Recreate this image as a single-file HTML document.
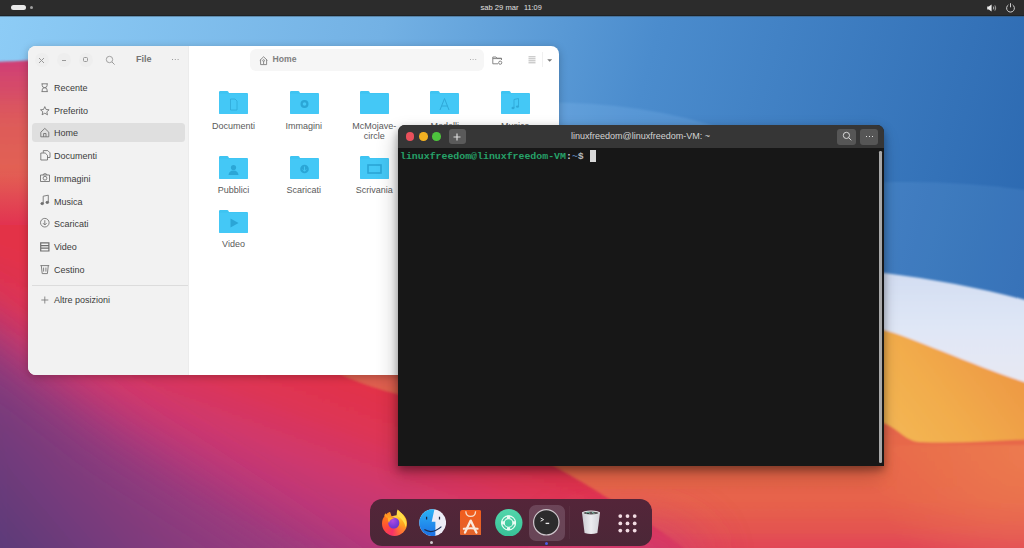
<!DOCTYPE html>
<html><head><meta charset="utf-8">
<style>
*{margin:0;padding:0;box-sizing:border-box}
html,body{width:1024px;height:548px;overflow:hidden;font-family:"Liberation Sans",sans-serif;background:#2f6db5}
#wall{position:absolute;left:0;top:0;width:1024px;height:548px}
#topbar{position:absolute;left:0;top:0;width:1024px;height:16px;background:linear-gradient(#2c2c2c 0,#2c2c2c 15px,#1e2327 15px);box-shadow:0 1px 0 rgba(60,80,95,.45);color:#e8e8e8}
.abs{position:absolute}
#fm{position:absolute;left:28px;top:46px;width:531px;height:329px;border-radius:8px;overflow:hidden;background:#fff;box-shadow:0 2px 8px rgba(0,0,0,.25)}
#side{position:absolute;left:0;top:0;width:161px;height:329px;background:#f2f2f2;box-shadow:inset -1px 0 0 #ececec}
.si{position:absolute;left:26px;font-size:9px;color:#3c3c3c;line-height:11px}
.fold{position:absolute;width:29px;height:23px}
.fl{position:absolute;width:70px;text-align:center;font-size:9px;color:#5a5a5a;line-height:10.3px}
#term{position:absolute;left:398px;top:125px;width:486px;height:341px;border-radius:7px 7px 0 0;overflow:hidden;background:#171717;box-shadow:0 4px 8px rgba(0,0,0,.36),-3px 9px 20px rgba(0,0,0,.2)}
#dock{position:absolute;left:370px;top:499px;width:282px;height:47px;border-radius:12px;background:linear-gradient(#542539,#4b2737)}
</style></head><body>
<svg id="wall" width="1024" height="548" viewBox="0 0 1024 548">
<defs>
<linearGradient id="sky" gradientUnits="userSpaceOnUse" x1="0" y1="20" x2="1024" y2="300">
<stop offset="0" stop-color="#8dccf6"/>
<stop offset="0.35" stop-color="#73b1e4"/>
<stop offset="0.6" stop-color="#4b8ccd"/>
<stop offset="1" stop-color="#2b68b0"/>
</linearGradient>
<linearGradient id="wht" gradientUnits="userSpaceOnUse" x1="0" y1="270" x2="0" y2="390">
<stop offset="0" stop-color="#d2ddf2"/>
<stop offset="0.5" stop-color="#e0e7f6"/>
<stop offset="1" stop-color="#e8e8f2"/>
</linearGradient>
<linearGradient id="orng" gradientUnits="userSpaceOnUse" x1="1024" y1="330" x2="880" y2="440">
<stop offset="0" stop-color="#ec9140"/>
<stop offset="0.6" stop-color="#f2ac4c"/>
<stop offset="1" stop-color="#f4b855"/>
</linearGradient>
<linearGradient id="ored" gradientUnits="userSpaceOnUse" x1="0" y1="60" x2="0" y2="548">
<stop offset="0" stop-color="#cf3e76"/>
<stop offset="0.12" stop-color="#dd5a5b"/>
<stop offset="0.25" stop-color="#e36351"/>
<stop offset="0.66" stop-color="#df5f4f"/>
<stop offset="0.8" stop-color="#e8694a"/>
<stop offset="0.9" stop-color="#e7634b"/>
<stop offset="0.96" stop-color="#e45550"/>
<stop offset="1" stop-color="#e14656"/>
</linearGradient>
<radialGradient id="oglow" gradientUnits="userSpaceOnUse" cx="1030" cy="450" r="160">
<stop offset="0" stop-color="#f08d55" stop-opacity="0.5"/>
<stop offset="1" stop-color="#f08d55" stop-opacity="0"/>
</radialGradient>
<linearGradient id="front" gradientUnits="userSpaceOnUse" x1="250" y1="330" x2="150" y2="600">
<stop offset="0" stop-color="#e33346"/>
<stop offset="0.18" stop-color="#de3454"/>
<stop offset="0.35" stop-color="#d0386c"/>
<stop offset="0.5" stop-color="#bd3878"/>
<stop offset="0.65" stop-color="#a83a7c"/>
<stop offset="1" stop-color="#903a7e"/>
</linearGradient>
<linearGradient id="purp" gradientUnits="userSpaceOnUse" x1="170" y1="480" x2="30" y2="600">
<stop offset="0" stop-color="#923a7e"/>
<stop offset="0.45" stop-color="#793a7c"/>
<stop offset="1" stop-color="#573a78"/>
</linearGradient>
<filter id="bl2" x="-50%" y="-50%" width="200%" height="200%"><feGaussianBlur stdDeviation="28"/></filter>
<filter id="bl" x="-5%" y="-5%" width="110%" height="110%"><feGaussianBlur stdDeviation="1.2"/></filter>
</defs>
<rect width="1024" height="548" fill="url(#sky)"/>
<path d="M480 108 C 560 96, 660 104, 740 135 L 740 300 L 480 300 Z" fill="#9fd0ff" opacity="0.16" filter="url(#bl)"/>
<path d="M800 190 C 880 178, 960 180, 1040 192 L 1040 320 L 800 320 Z" fill="#9fd0ff" opacity="0.1" filter="url(#bl)"/>
<g filter="url(#bl)">
<path d="M560 330 C 700 272, 820 264, 884 273 C 940 280, 990 290, 1040 304 L1040 560 L560 560 Z" fill="url(#wht)"/>
<path d="M560 360 C 700 320, 820 318, 884 330 C 912 337, 985 371, 1040 387 L1040 560 L560 560 Z" fill="url(#orng)"/>
<path d="M-20 62.5 C 10 61.8, 40 59.6, 60 59 C 200 61, 500 200, 700 330 C 800 400, 850 420, 884 423 C 900 430, 905 441, 920 442 C 960 444, 1000 440, 1040 439 L1040 560 L-20 560 Z" fill="url(#ored)"/>
<rect x="860" y="445" width="180" height="115" fill="url(#oglow)"/>
<path d="M-20 222 L 30 222 C 100 245, 250 320, 342 375 C 360 383, 380 390, 398 394 C 470 425, 520 448, 554 466 C 580 480, 600 493, 610 499 C 640 516, 670 536, 700 562 L-20 562 Z" fill="url(#front)"/>
</g>
<linearGradient id="softL" gradientUnits="userSpaceOnUse" x1="0" y1="168" x2="0" y2="225"><stop offset="0" stop-color="#e1345a" stop-opacity="0"/><stop offset="1" stop-color="#e23350" stop-opacity="1"/></linearGradient>
<rect x="-5" y="168" width="40" height="57" fill="url(#softL)"/>
<ellipse cx="630" cy="565" rx="70" ry="38" fill="#cf3c74" opacity="0.85" filter="url(#bl2)"/>
<path d="M-60 298 Q 40 380, 120 440 Q 250 520, 430 650 L -60 650 Z" fill="url(#purp)" filter="url(#bl2)"/>
</svg>

<div id="topbar">
 <div class="abs" style="left:11px;top:5px;width:14.5px;height:5px;border-radius:3px;background:#e8e8e8"></div>
 <div class="abs" style="left:29.8px;top:6px;width:3.2px;height:3.2px;border-radius:2px;background:#a0a0a0"></div>
 <div class="abs" style="left:480.5px;top:2.5px;font-size:7.6px;line-height:10px;color:#e0e0e0;white-space:pre">sab 29 mar</div>
 <div class="abs" style="left:524px;top:2.5px;font-size:7.3px;line-height:10px;color:#e0e0e0;white-space:pre">11:09</div>
 <svg class="abs" style="left:986px;top:3px" width="12" height="10" viewBox="0 0 12 10">
  <path d="M1.2 3.6 H2.8 L5.6 1.6 V8.4 L2.8 6.4 H1.2 Z" fill="#ececec"/>
  <path d="M7.4 3.6 Q8.3 5 7.4 6.4" stroke="#c8c8c8" stroke-width="0.9" fill="none"/>
  <path d="M8.9 2.4 Q10.6 5 8.9 7.6" stroke="#b0b0b0" stroke-width="0.9" fill="none"/>
 </svg>
 <svg class="abs" style="left:1005px;top:2px" width="11" height="11" viewBox="0 0 11 11">
  <path d="M3.4 2.9 A3.9 3.9 0 1 0 7.6 2.9" stroke="#cfcfcf" stroke-width="1" fill="none"/>
  <path d="M5.5 1.2 V5.3" stroke="#cfcfcf" stroke-width="1"/>
 </svg>
</div>

<div id="fm">
 <div id="side">
  <div class="abs" style="left:6.5px;top:7px;width:14px;height:14px;border-radius:7px;background:#eeeeee"></div>
  <svg class="abs" style="left:10px;top:10.5px" width="7" height="7" viewBox="0 0 7 7"><path d="M1 1 L6 6 M6 1 L1 6" stroke="#999" stroke-width="1"/></svg>
  <div class="abs" style="left:28.6px;top:7px;width:14px;height:14px;border-radius:7px;background:#eeeeee"></div>
  <div class="abs" style="left:33.5px;top:13.5px;width:4px;height:1px;background:#999"></div>
  <div class="abs" style="left:50.5px;top:7px;width:14px;height:14px;border-radius:7px;background:#eeeeee"></div>
  <div class="abs" style="left:55px;top:11.3px;width:5px;height:5px;border:1px solid #999;border-radius:1.5px"></div>
  <svg class="abs" style="left:77px;top:8.5px" width="11" height="11" viewBox="0 0 11 11"><circle cx="4.5" cy="4.5" r="3.2" stroke="#999" stroke-width="0.9" fill="none"/><path d="M6.9 6.9 L9.6 9.6" stroke="#999" stroke-width="1"/></svg>
  <div class="abs" style="left:108px;top:8px;font-size:9px;font-weight:bold;color:#747474;line-height:11px">File</div>
  <div class="abs" style="left:143.5px;top:13px;width:1.4px;height:1.4px;background:#999;box-shadow:2.8px 0 0 #999,5.6px 0 0 #999"></div>

  <div class="abs" style="left:4px;top:77.2px;width:153.4px;height:19px;border-radius:3.5px;background:#dfdfdf"></div>
  <svg class="abs" style="left:0;top:0" width="160" height="329" viewBox="0 0 160 329" fill="none" stroke="#6e6e6e" stroke-width="0.85">
   <!-- hourglass -->
   <path d="M13.5 37.8 H19.8 M13.5 45.6 H19.8 M14.2 37.8 V39.5 Q14.2 41.5 16.6 41.7 Q19.1 41.9 19.1 43.9 V45.6 M19.1 37.8 V39.5 Q19.1 41.5 16.6 41.7 Q14.2 41.9 14.2 43.9 V45.6"/>
   <!-- star -->
   <path d="M16.8 60.6 L18.1 63.5 L21.1 63.8 L18.8 65.8 L19.5 68.8 L16.8 67.2 L14.1 68.8 L14.8 65.8 L12.5 63.8 L15.5 63.5 Z"/>
   <!-- home -->
   <path d="M12.8 86.2 L16.8 82.4 L20.8 86.2 V90.8 H12.8 Z M15.6 90.8 V87.5 H18 V90.8"/>
   <!-- documents -->
   <path d="M12.8 107 H17.2 L19.5 109.3 V114 H12.8 Z M15.3 106.8 V104.6 H19.8 L22 106.8 V111.5 H19.5"/>
   <!-- camera -->
   <path d="M12.5 129 H21.5 V135.5 H12.5 Z M15 129 L15.8 127.8 H18.2 L19 129"/><circle cx="17" cy="132.2" r="1.9"/>
   <!-- music -->
   <path d="M15.2 157.5 V150.2 L20.3 149.2 V156.2"/><ellipse cx="14.2" cy="157.6" rx="1.4" ry="1.1" fill="#6e6e6e"/><ellipse cx="19.3" cy="156.4" rx="1.4" ry="1.1" fill="#6e6e6e"/>
   <!-- download -->
   <circle cx="16.8" cy="176.7" r="4.3"/><path d="M16.8 174.2 V178.8 M15 177.2 L16.8 179 L18.6 177.2"/>
   <!-- video -->
   <path d="M12.7 196.8 H20.9 V205 H12.7 Z M12.7 199.6 H20.9 M12.7 202.2 H20.9" stroke-width="1.2"/>
   <!-- trash -->
   <path d="M12.4 219.6 H21.2 M13.3 219.6 L14.2 227.6 H19.4 L20.3 219.6 M15.6 221.6 V225.6 M17.9 221.6 V225.6"/>
   <!-- plus -->
   <path d="M16.8 250.5 V257.5 M13.3 254 H20.3" stroke="#777"/>
  </svg>
  <div class="si" style="top:37.0px">Recente</div>
  <div class="si" style="top:59.7px">Preferito</div>
  <div class="si" style="top:82.4px">Home</div>
  <div class="si" style="top:105.1px">Documenti</div>
  <div class="si" style="top:127.8px">Immagini</div>
  <div class="si" style="top:150.5px">Musica</div>
  <div class="si" style="top:173.2px">Scaricati</div>
  <div class="si" style="top:195.9px">Video</div>
  <div class="si" style="top:218.6px">Cestino</div>
  <div class="abs" style="left:4px;top:239px;width:156px;height:1px;background:#dcdcdc"></div>
  <div class="si" style="top:248.8px">Altre posizioni</div>
 </div>
 <!-- content header -->
 <div class="abs" style="left:222px;top:3.3px;width:234.4px;height:21.7px;border-radius:6px;background:#f6f6f6"></div>
 <svg class="abs" style="left:231px;top:9.8px" width="10" height="10" viewBox="0 0 10 10" fill="none" stroke="#7e7e7e" stroke-width="0.9"><path d="M0.8 4.4 L4.6 0.8 L8.4 4.4 M1.6 3.8 V8.6 H7.6 V3.8"/><circle cx="4.6" cy="4.6" r="0.9"/><path d="M4.6 5.6 V8.2"/></svg>
 <div class="abs" style="left:244.6px;top:8.3px;font-size:8.6px;font-weight:bold;color:#808080;line-height:11px">Home</div>
 <div class="abs" style="left:441.5px;top:13.2px;width:1.3px;height:1.3px;background:#b0b0b0;box-shadow:2.6px 0 0 #b0b0b0,5.2px 0 0 #b0b0b0"></div>
 <svg class="abs" style="left:463.5px;top:9.5px" width="11" height="9" viewBox="0 0 11 9" fill="none" stroke="#7a7a7a" stroke-width="0.9"><path d="M0.8 7.8 V1 H4 L5 2.2 H9.5 V4"/><path d="M0.8 2.6 H9.5 M0.8 7.8 H6"/><circle cx="8.2" cy="6.7" r="1.6"/></svg>
 <svg class="abs" style="left:500px;top:10px" width="8" height="8" viewBox="0 0 8 8" stroke="#999" stroke-width="0.7"><path d="M0.5 0.8 H7.5 M0.5 2.8 H7.5 M0.5 4.8 H7.5 M0.5 6.8 H7.5"/></svg>
 <div class="abs" style="left:513.8px;top:6px;width:1px;height:15px;background:#f0f0f0"></div>
 <svg class="abs" style="left:518.5px;top:12.8px" width="6" height="4" viewBox="0 0 6 4"><path d="M0.2 0.2 H5.2 L2.7 2.8 Z" fill="#7a7a7a"/></svg>

 <!-- folders -->
 <svg width="0" height="0" style="position:absolute">
  <defs>
   <symbol id="fold" viewBox="0 0 29 23">
    <path d="M1.2 0 H8.2 Q9 0 9.4 0.8 L10 2 H27.8 Q29 2 29 3.2 V21.8 Q29 23 27.8 23 H1.2 Q0 23 0 21.8 V1.2 Q0 0 1.2 0 Z" fill="#3ec4f2"/>
    <path d="M0 2.8 H29 V21.8 Q29 23 27.8 23 H1.2 Q0 23 0 21.8 Z" fill="#44c8f6"/>
   </symbol>
  </defs>
 </svg>
 <svg class="fold" style="left:191.3px;top:45.3px" viewBox="0 0 29 23"><use href="#fold"/><path d="M11.5 8 H16 L18 10 V19 H11.5 Z" fill="none" stroke="#2fa8d8" stroke-width="0.8"/></svg>
 <svg class="fold" style="left:261.5px;top:45.3px" viewBox="0 0 29 23"><use href="#fold"/><circle cx="14.5" cy="13" r="4" fill="#2ba6d6"/><circle cx="14.5" cy="13" r="1.8" fill="#44c8f6"/></svg>
 <svg class="fold" style="left:332px;top:45.3px" viewBox="0 0 29 23"><use href="#fold"/></svg>
 <svg class="fold" style="left:402.4px;top:45.3px" viewBox="0 0 29 23"><use href="#fold"/><path d="M10 19 L14.5 7.5 L19 19 M11.7 15 H17.3" fill="none" stroke="#2fa8d8" stroke-width="1"/></svg>
 <svg class="fold" style="left:473px;top:45.3px" viewBox="0 0 29 23"><use href="#fold"/><path d="M13 17 V8.5 L17.5 7.5 V15.5" fill="none" stroke="#2fa8d8" stroke-width="0.9"/><ellipse cx="12" cy="17" rx="1.5" ry="1.2" fill="#2fa8d8"/><ellipse cx="16.5" cy="15.6" rx="1.5" ry="1.2" fill="#2fa8d8"/></svg>
 <div class="fl" style="left:170.5px;top:74.5px">Documenti</div>
 <div class="fl" style="left:240.7px;top:74.5px">Immagini</div>
 <div class="fl" style="left:311.3px;top:74.5px">McMojave-<br>circle</div>
 <div class="fl" style="left:381.7px;top:74.5px">Modelli</div>
 <div class="fl" style="left:452.2px;top:74.5px">Musica</div>

 <svg class="fold" style="left:191.3px;top:110px" viewBox="0 0 29 23"><use href="#fold"/><circle cx="14.5" cy="11.5" r="2.6" fill="#2ba6d6"/><path d="M9.5 19 Q10 14.5 14.5 14.5 Q19 14.5 19.5 19 Z" fill="#2ba6d6"/></svg>
 <svg class="fold" style="left:261.5px;top:110px" viewBox="0 0 29 23"><use href="#fold"/><circle cx="14.5" cy="13" r="4.3" fill="#2ba6d6"/><path d="M14.5 10.5 V15 M12.8 13.5 L14.5 15.3 L16.2 13.5" fill="none" stroke="#44c8f6" stroke-width="0.9"/></svg>
 <svg class="fold" style="left:332px;top:110px" viewBox="0 0 29 23"><use href="#fold"/><rect x="8" y="9" width="13" height="8" fill="none" stroke="#2ba6d6" stroke-width="1.6"/></svg>
 <div class="fl" style="left:170.5px;top:139.2px">Pubblici</div>
 <div class="fl" style="left:240.7px;top:139.2px">Scaricati</div>
 <div class="fl" style="left:311.3px;top:139.2px">Scrivania</div>

 <svg class="fold" style="left:191.3px;top:163.7px" viewBox="0 0 29 23"><use href="#fold"/><path d="M11.5 8.5 L19.5 13 L11.5 17.5 Z" fill="#2ba6d6"/></svg>
 <div class="fl" style="left:170.5px;top:192.8px">Video</div>
</div>

<div id="term">
 <div class="abs" style="left:0;top:0;width:486px;height:23px;background:#363636"></div>
 <div class="abs" style="left:7.8px;top:7.4px;width:8.6px;height:8.6px;border-radius:50%;background:#e9505b"></div>
 <div class="abs" style="left:21.1px;top:7.4px;width:8.6px;height:8.6px;border-radius:50%;background:#f1b021"></div>
 <div class="abs" style="left:34px;top:7.4px;width:8.6px;height:8.6px;border-radius:50%;background:#4dc33d"></div>
 <div class="abs" style="left:50.6px;top:4.3px;width:17.2px;height:14.8px;border-radius:3px;background:#5a5a5a"></div>
 <svg class="abs" style="left:55.2px;top:7.7px" width="8" height="8" viewBox="0 0 8 8"><path d="M4 0.5 V7.5 M0.5 4 H7.5" stroke="#dcdcdc" stroke-width="1.2"/></svg>
 <div class="abs" style="left:173px;top:6px;font-size:9px;color:#d4d4d4;line-height:11px;white-space:pre">linuxfreedom@linuxfreedom-VM: ~</div>
 <div class="abs" style="left:439.3px;top:3.7px;width:18.7px;height:15.9px;border-radius:3px;background:#565656"></div>
 <svg class="abs" style="left:443.5px;top:6.3px" width="11" height="11" viewBox="0 0 11 11" fill="none" stroke="#dedede" stroke-width="0.95"><circle cx="4.4" cy="4.4" r="3.1"/><path d="M6.7 6.7 L9.3 9.3"/></svg>
 <div class="abs" style="left:461.7px;top:3.7px;width:18.7px;height:15.9px;border-radius:3px;background:#565656"></div>
 <div class="abs" style="left:467.6px;top:10.8px;width:1.5px;height:1.5px;background:#e0e0e0;box-shadow:3px 0 0 #e0e0e0,6px 0 0 #e0e0e0"></div>
 <div class="abs" style="left:0;top:23px;width:486px;height:318px;background:#171717"></div>
 <div class="abs" style="left:2px;top:26px;font-family:'Liberation Mono',monospace;font-size:9.9px;line-height:12px;white-space:pre;font-weight:bold"><span style="color:#26a269">linuxfreedom@linuxfreedom-VM</span><span style="color:#d0d0d0">:</span><span style="color:#5b7fb3">~</span><span style="color:#b8b8b8">$ </span></div>
 <div class="abs" style="left:192.4px;top:24.7px;width:5.6px;height:12.7px;background:#d8d8d8"></div>
 <div class="abs" style="left:481.4px;top:25.6px;width:2.6px;height:312.8px;border-radius:1.3px;background:#a8a8a8"></div>
</div>

<div id="dock">
 <!-- firefox -->
 <div class="abs" style="left:11.8px;top:12px;width:25px;height:25px;border-radius:50%;background:conic-gradient(from 0deg,#ffd43e 0deg,#ffbe2a 50deg,#ffa020 100deg,#ff6a3a 150deg,#f6306a 195deg,#ff4a3a 245deg,#ff6e20 290deg,#ff8a1e 330deg,#ffd43e 360deg)"></div>
 <svg class="abs" style="left:8px;top:7px" width="32" height="32" viewBox="0 0 32 32">
  <defs>
   <radialGradient id="ffp" cx="0.4" cy="0.3" r="0.8"><stop offset="0" stop-color="#b04ae0"/><stop offset="0.6" stop-color="#7a3ad8"/><stop offset="1" stop-color="#5a38c8"/></radialGradient>
  </defs>
  <path d="M11.6 4.6 L19.6 3.2 L18.5 9.2 L13.5 10.2 Z" fill="#4c2536"/>
  <path d="M19.6 3.4 C 22 5.5, 26 9, 27.6 13.5 C 28.6 16.5, 28.6 19, 27.8 21.5 C 26.5 16, 23.5 12.5, 20 10.5 C 18.5 8, 18.6 5.5, 19.6 3.4 Z" fill="#ffdc48"/>
  <path d="M6.2 9.6 L7.4 7.2 L9.2 9.4 L10.9 7.6 L12.3 10.4 C 14 10.6, 15.5 11.2, 16.8 12 L 12 13.5 C 10 12.8, 8 11.5, 6.2 9.6 Z" fill="#ff9a24"/>
  <circle cx="15.8" cy="17" r="5.6" fill="url(#ffp)"/>
  <path d="M10 11.8 C 12.5 11.5, 15 11.6, 16.8 12.2 C 13.5 12.6, 11.5 14.5, 11 17 C 10 15.5, 9.6 13.5, 10 11.8 Z" fill="#ffae2a"/>
 </svg>
 <!-- finder -->
 <svg class="abs" style="left:48.6px;top:10px" width="27.4" height="27.4" viewBox="0 0 27.4 27.4">
  <defs>
   <linearGradient id="fdb" x1="0" y1="0" x2="0" y2="1"><stop offset="0" stop-color="#2bb3f6"/><stop offset="1" stop-color="#1b6fe4"/></linearGradient>
   <clipPath id="fdc"><circle cx="13.7" cy="13.7" r="13.4"/></clipPath>
  </defs>
  <g clip-path="url(#fdc)">
   <rect width="27.4" height="27.4" fill="#ececf6"/>
   <path d="M0 0 H15.5 L12.7 12.8 H16.4 V27.4 H0 Z" fill="url(#fdb)"/>
  </g>
  <path d="M7.6 7.8 V10.6 M20.5 7.8 V10.6" stroke="#1a2640" stroke-width="1.25"/>
  <path d="M5.4 20.6 Q 13.5 25.6, 22.4 17.6" stroke="#1a2f58" stroke-width="1.2" fill="none"/>
 </svg>
 <div class="abs" style="left:60.3px;top:42.3px;width:3px;height:3px;border-radius:50%;background:#d0c8cc"></div>
 <!-- app store -->
 <svg class="abs" style="left:89.5px;top:10.8px" width="21.4" height="25.6" viewBox="0 0 21.4 25.6">
  <defs><linearGradient id="asg" x1="0" y1="0" x2="0" y2="1"><stop offset="0" stop-color="#f25c1c"/><stop offset="1" stop-color="#e2642c"/></linearGradient></defs>
  <rect x="0" y="0" width="21.4" height="25.6" rx="2.2" fill="url(#asg)"/>
  <path d="M5.8 1.2 Q 6 6.4, 10.7 6.4 Q 15.4 6.4, 15.6 1.2" stroke="#f7ddc9" stroke-width="1.3" fill="none"/>
  <path d="M5 22.6 L10.7 10.6 L16.4 22.6" stroke="#fae9dc" stroke-width="2.3" fill="none" stroke-linejoin="round" stroke-linecap="round"/>
  <path d="M3.8 18.8 Q 10.7 17.9, 17.6 18.8" stroke="#fae9dc" stroke-width="2" fill="none" stroke-linecap="round"/>
 </svg>
 <!-- green -->
 <svg class="abs" style="left:125px;top:9.8px" width="27.6" height="27.6" viewBox="0 0 27.6 27.6">
  <defs><linearGradient id="grg" x1="0" y1="0" x2="0" y2="1"><stop offset="0" stop-color="#52d6ab"/><stop offset="1" stop-color="#38c297"/></linearGradient></defs>
  <circle cx="13.8" cy="13.8" r="13.7" fill="url(#grg)"/>
  <g fill="none" stroke="#eafcf4">
   <circle cx="13.6" cy="13.9" r="7" stroke-width="1.1"/>
   <circle cx="13.6" cy="13.9" r="4.3" stroke-width="1.1"/>
   <path d="M13.6 6.6 V9.6 M13.6 18.2 V21.2 M6.3 13.9 H9.3 M17.9 13.9 H20.9" stroke-width="3.2"/>
  </g>
 </svg>
 <!-- terminal -->
 <div class="abs" style="left:159.4px;top:6.2px;width:35.3px;height:35.4px;border-radius:7px;background:rgba(150,120,140,.38)"></div>
 <svg class="abs" style="left:163.4px;top:10.2px" width="26.6" height="26.6" viewBox="0 0 26.6 26.6">
  <circle cx="13.3" cy="13.3" r="12.7" fill="#2c2b2c" stroke="#cfc6cc" stroke-width="1.2"/>
  <path d="M7.6 9 L10.6 10.6 L7.6 12.2" stroke="#eaeaea" stroke-width="1" fill="none"/>
  <path d="M12.6 14.4 H16.2" stroke="#eaeaea" stroke-width="1.3"/>
 </svg>
 <div class="abs" style="left:175.2px;top:42.5px;width:3.2px;height:3.2px;border-radius:50%;background:#4c5ce0"></div>
 <div class="abs" style="left:199.3px;top:7px;width:1px;height:33px;background:rgba(255,255,255,.035)"></div>
 <!-- trash -->
 <svg class="abs" style="left:210.5px;top:11px" width="20" height="25" viewBox="0 0 20 25">
  <defs><linearGradient id="trg" x1="0" y1="0" x2="1" y2="0"><stop offset="0" stop-color="#c9c9cf"/><stop offset="0.5" stop-color="#ececf0"/><stop offset="1" stop-color="#d0d0d6"/></linearGradient></defs>
  <path d="M1 2.5 L3.6 23 Q 10 25.2, 16.4 23 L19 2.5 Z" fill="url(#trg)"/>
  <ellipse cx="10" cy="2.8" rx="9" ry="2.2" fill="#e6e6ea"/>
  <ellipse cx="10" cy="3" rx="7.6" ry="1.5" fill="#5a5658"/>
  <path d="M5 3.2 L7 2 L9 3.4 M11 2.2 L13.5 3.6" stroke="#7fc9b2" stroke-width="0.9"/>
 </svg>
 <!-- grid -->
 <svg class="abs" style="left:246px;top:12.5px" width="23" height="23" viewBox="0 0 23 23" fill="#f3dde4">
  <circle cx="4.3" cy="4.1" r="1.9"/><circle cx="11.5" cy="4.1" r="1.9"/><circle cx="18.7" cy="4.1" r="1.9"/>
  <circle cx="4.3" cy="11.4" r="1.9"/><circle cx="11.5" cy="11.4" r="1.9"/><circle cx="18.7" cy="11.4" r="1.9"/>
  <circle cx="4.3" cy="18.6" r="1.9"/><circle cx="11.5" cy="18.6" r="1.9"/><circle cx="18.7" cy="18.6" r="1.9"/>
 </svg>
</div>
</body></html>
